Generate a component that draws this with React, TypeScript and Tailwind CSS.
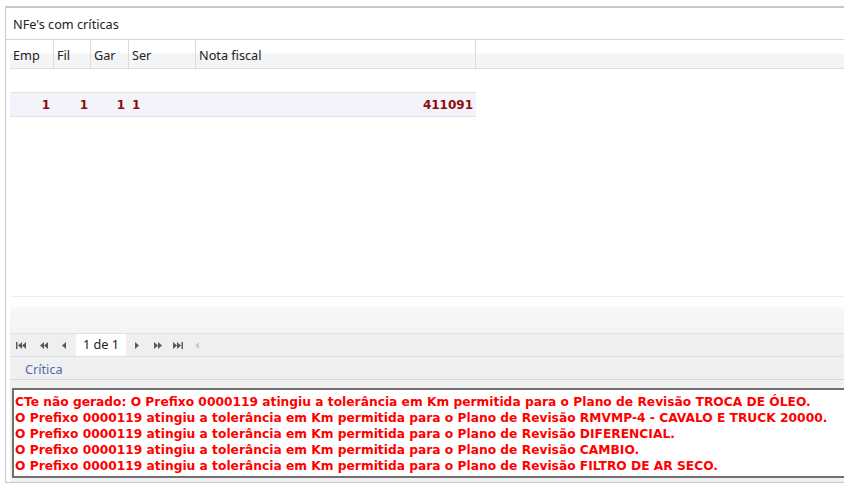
import React from 'react';

const columns = [
  { key: 'emp', label: 'Emp', width: 'w-[44px]' },
  { key: 'fil', label: 'Fil', width: 'w-[37px]' },
  { key: 'gar', label: 'Gar', width: 'w-[38px]' },
  { key: 'ser', label: 'Ser', width: 'w-[67px]' },
  { key: 'nota', label: 'Nota fiscal', width: 'w-[280px]' },
];

const criticas = [
  'CTe não gerado: O Prefixo 0000119 atingiu a tolerância em Km permitida para o Plano de Revisão TROCA DE ÓLEO.',
  'O Prefixo 0000119 atingiu a tolerância em Km permitida para o Plano de Revisão RMVMP-4 - CAVALO E TRUCK 20000.',
  'O Prefixo 0000119 atingiu a tolerância em Km permitida para o Plano de Revisão DIFERENCIAL.',
  'O Prefixo 0000119 atingiu a tolerância em Km permitida para o Plano de Revisão CAMBIO.',
  'O Prefixo 0000119 atingiu a tolerância em Km permitida para o Plano de Revisão FILTRO DE AR SECO.',
];

// pager arrows, drawn small like the old grid toolbar
const Tri: React.FC<{ dir: 'l' | 'r'; x: number }> = ({ dir, x }) =>
  dir === 'l' ? (
    <polygon points={`${x + 4},0 ${x + 4},7 ${x},3.5`} />
  ) : (
    <polygon points={`${x},0 ${x},7 ${x + 4},3.5`} />
  );

const PagerIcon: React.FC<{ kind: 'first' | 'prevPage' | 'prev' | 'next' | 'nextPage' | 'last'; faded?: boolean }> = ({
  kind,
  faded,
}) => {
  const w = kind === 'prev' || kind === 'next' ? 4 : kind === 'first' || kind === 'last' ? 10 : 8;
  return (
    <svg width={w} height={7} viewBox={`0 0 ${w} 7`} className={faded ? 'fill-[#c9c9c9]' : 'fill-[#5a5a5a]'}>
      {kind === 'first' && (
        <>
          <rect x={0} y={0} width={1.5} height={7} />
          <Tri dir="l" x={2} />
          <Tri dir="l" x={6} />
        </>
      )}
      {kind === 'prevPage' && (
        <>
          <Tri dir="l" x={0} />
          <Tri dir="l" x={4} />
        </>
      )}
      {kind === 'prev' && <Tri dir="l" x={0} />}
      {kind === 'next' && <Tri dir="r" x={0} />}
      {kind === 'nextPage' && (
        <>
          <Tri dir="r" x={0} />
          <Tri dir="r" x={4} />
        </>
      )}
      {kind === 'last' && (
        <>
          <Tri dir="r" x={0} />
          <Tri dir="r" x={4} />
          <rect x={8.5} y={0} width={1.5} height={7} />
        </>
      )}
    </svg>
  );
};

const App: React.FC = () => {
  return (
    <div className="w-[844px] h-[488px] overflow-hidden bg-white pl-[5px] pt-[6px] font-['Noto_Sans',sans-serif] text-[12.7px] text-[#222]">
      <div className="w-[900px] h-[477px] border-l border-t-2 border-b border-[#c8c8c8] flex flex-col">
        {/* title */}
        <div className="h-[32px] shrink-0 border-b border-[#d6d6d6] flex items-center pl-[7px] pt-[3px]">
          NFe's com críticas
        </div>

        <div className="flex-1 flex flex-col pl-[4px]">
          {/* column headers */}
          <div className="h-[29px] shrink-0 flex border-b border-[#dedede] bg-[linear-gradient(to_bottom,#ffffff_0%,#ffffff_45%,#f3f4f6_50%,#f3f4f6_100%)]">
            {columns.map((c) => (
              <div key={c.key} className={`${c.width} shrink-0 border-r border-[#dcdcdc] flex items-center pl-[3px] pt-[3px]`}>
                {c.label}
              </div>
            ))}
            <div className="flex-1" />
          </div>

          {/* filter row */}
          <div className="h-[23px] shrink-0" />

          {/* data */}
          <div className="h-[25px] shrink-0 w-[466px] flex items-center border-y border-[#e2e2e2] bg-[#f4f3fb] font-['DejaVu_Sans',sans-serif] text-[12px] font-bold text-[#8e0c0c]">
            <div className="w-[44px] text-right pr-[4px]">1</div>
            <div className="w-[37px] text-right pr-[3px]">1</div>
            <div className="w-[38px] text-right pr-[4px]">1</div>
            <div className="w-[67px] pl-[3px]">1</div>
            <div className="w-[280px] text-right pr-[3px]">411091</div>
          </div>

          <div className="h-[180px] shrink-0 border-b border-[#eeeeee]" />
          <div className="h-[10px] shrink-0" />

          {/* toolbar */}
          <div className="h-[27px] shrink-0 border-b border-[#e0e0e0] bg-[linear-gradient(to_bottom,#f8f9fa,#f2f3f5)]" />

          {/* pager */}
          <div className="h-[23px] shrink-0 flex items-center bg-[#efefef] border-b border-[#d9e0e8]">
            <div className="w-[66px] flex items-center pl-[6px]">
              <span className="w-[24px] flex"><PagerIcon kind="first" /></span>
              <span className="w-[23px] flex"><PagerIcon kind="prevPage" /></span>
              <span className="w-[14px] flex"><PagerIcon kind="prev" /></span>
            </div>
            <div className="w-[50px] h-[22px] bg-white flex items-center justify-center">1 de 1</div>
            <div className="flex items-center pl-[9px]">
              <span className="w-[19px] flex"><PagerIcon kind="next" /></span>
              <span className="w-[19px] flex"><PagerIcon kind="nextPage" /></span>
              <span className="w-[22px] flex"><PagerIcon kind="last" /></span>
              <span className="flex"><PagerIcon kind="prev" faded /></span>
            </div>
          </div>

          {/* tab */}
          <div className="h-[23px] shrink-0 flex items-center pl-[15px] pt-[3px] bg-[#f0f0f0] border-b border-[#d6d6d6] text-[#4b6ea8]">
            Crítica
          </div>

          {/* message box */}
          <div className="flex-1 bg-[#f0f0f0] pt-[8px] pl-[2px] pb-[4px]">
            <div className="h-[90px] bg-white border-2 border-[#6f6f6f] px-[1px] pt-[4px] font-['DejaVu_Sans',sans-serif] text-[12.25px] font-bold text-[#ff0000] leading-[16px] whitespace-nowrap">
              {criticas.map((m, i) => (
                <div key={i}>{m}</div>
              ))}
            </div>
          </div>
        </div>
      </div>
    </div>
  );
};

export default App;
